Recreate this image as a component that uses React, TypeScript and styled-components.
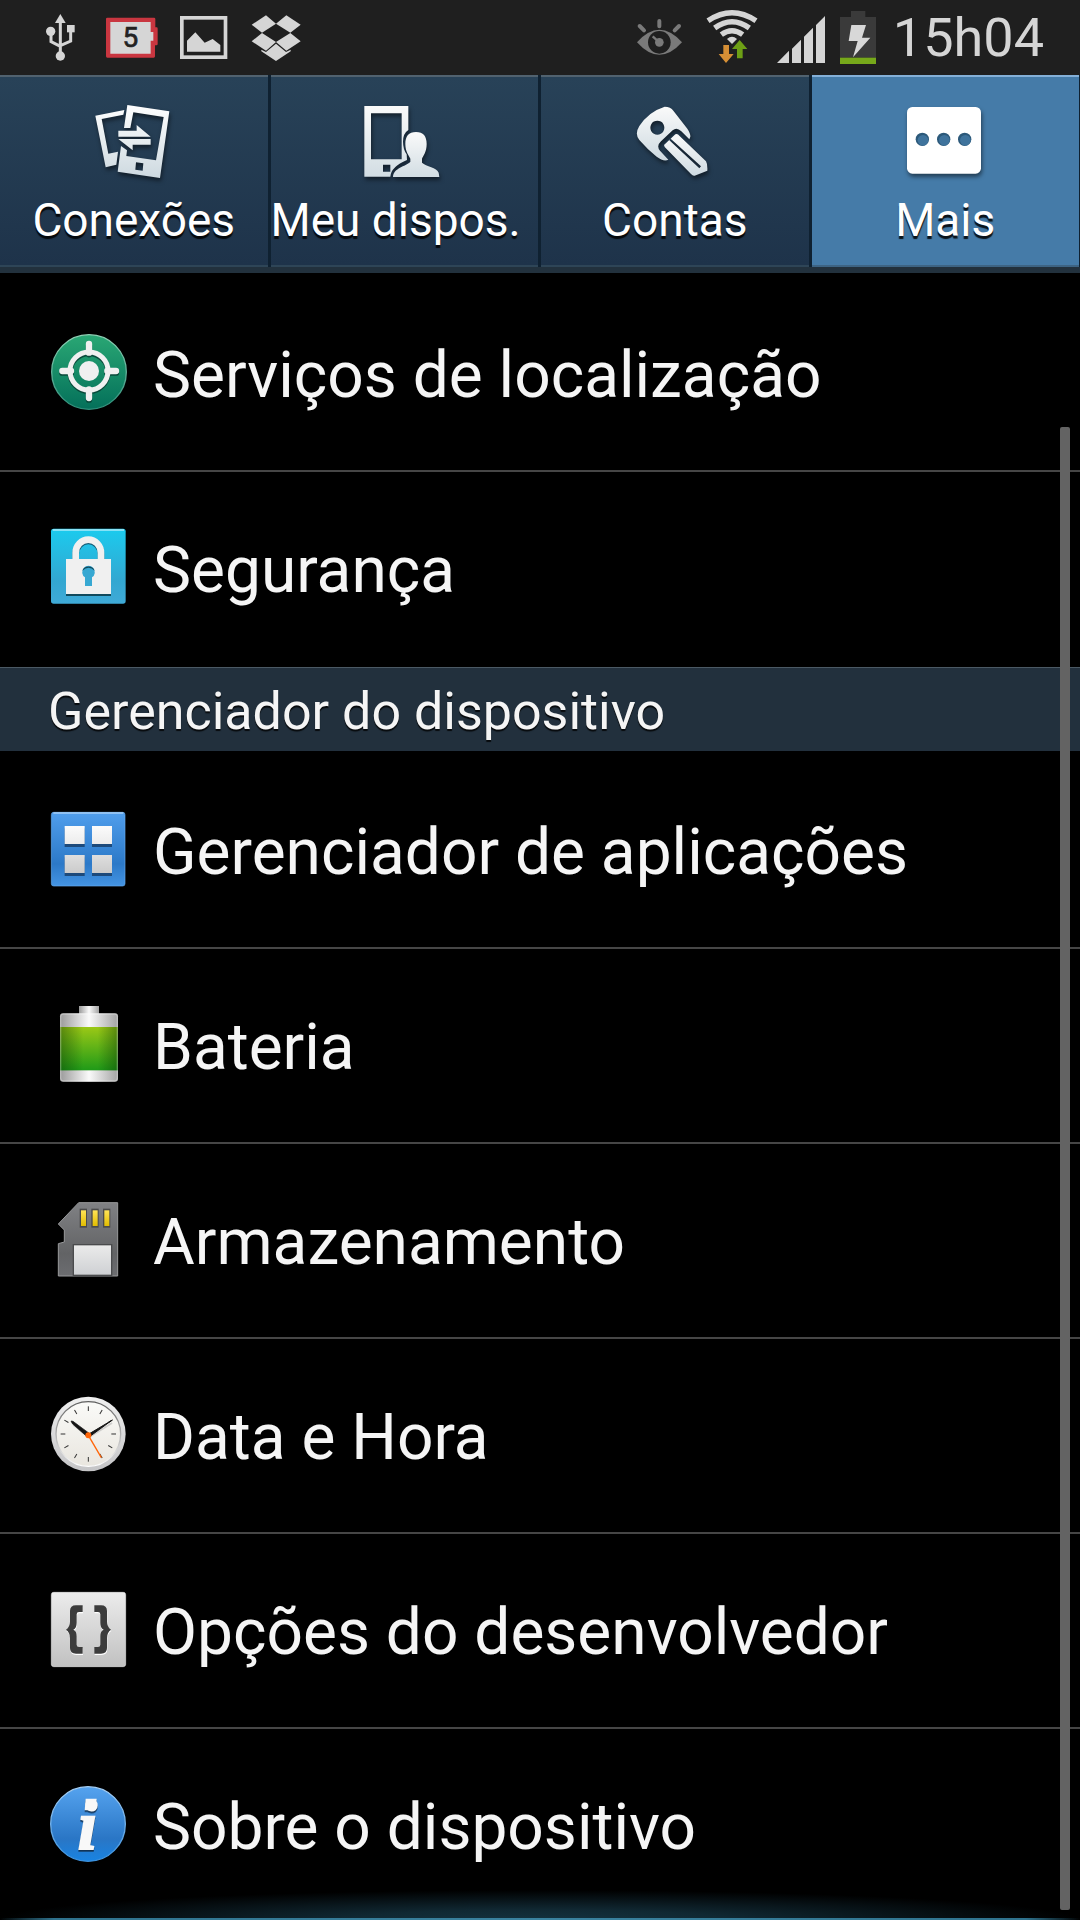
import React from "react";
import styled, { createGlobalStyle } from "styled-components";

const GlobalStyle = createGlobalStyle`
  * { box-sizing: border-box; }
  body {
    margin: 0;
    background: #000;
    color: #f5f5f5;
    font-family: Roboto, "Noto Sans", sans-serif;
  }
  button { font: inherit; color: inherit; border: 0; margin: 0; background: none; }
`;

const Screen = styled.div`
  display: flex;
  flex-direction: column;
  height: 100vh;
  overflow: hidden;
`;

const StatusBar = styled.header`
  display: flex;
  justify-content: space-between;
  flex: none;
  height: 75px;
  padding: 0 36px 0 45px;
  background: #1f1f1f;
  color: #d5d5d5;
`;

const StatusGroup = styled.div<{ $gap: number }>`
  display: flex;
  align-items: center;
  gap: ${(p) => p.$gap}px;
`;

const StatusIcon = styled.svg`
  display: block;
  flex: none;
  height: 75px;
  overflow: visible;
`;

const Clock = styled.time`
  font-size: 54px;
  line-height: 76px;
`;

const TabBar = styled.nav`
  display: grid;
  grid-template-columns: repeat(4, 1fr);
  gap: 3px;
  flex: none;
  height: 198px;
  padding: 0 1px 6px 0;
  background: linear-gradient(#0f2131 192px, #22313d 192px);
`;

const Tab = styled.button<{ $active?: boolean }>`
  display: flex;
  flex-direction: column;
  align-items: center;
  gap: 13px;
  min-width: 0;
  padding: 27px 0 0;
  border-top: 2px solid ${(p) => (p.$active ? "#84b0d8" : "#51626f")};
  border-bottom: 2px solid ${(p) => (p.$active ? "#3d6484" : "#2e4557")};
  background: ${(p) => (p.$active ? "#457ba8" : "linear-gradient(#284258, #1e334a)")};
`;

const TabIcon = styled.svg`
  display: block;
  width: 76px;
  height: 76px;
  overflow: visible;
  filter: drop-shadow(1px 3px 2px rgba(0, 0, 0, 0.5));
`;

const TabLabel = styled.span<{ $start?: boolean }>`
  align-self: ${(p) => (p.$start ? "flex-start" : "center")};
  font-size: 46px;
  line-height: 54px;
  color: #fff;
  white-space: nowrap;
  text-shadow: 0 3px 1px rgba(0, 0, 0, 0.85);
`;

const Content = styled.main`
  position: relative;
  flex: 1;
  min-height: 0;
  padding-top: 4px;
  overflow: hidden;
`;

const List = styled.ul`
  margin: 0;
  padding: 0;
  list-style: none;
`;

const Item = styled.li`
  border-bottom: 2px solid #464646;
  &:last-child { border-bottom-color: transparent; }
`;

const Row = styled.button`
  display: flex;
  align-items: center;
  gap: 27px;
  width: 100%;
  height: 193px;
  padding: 0 24px 3px 50px;
  text-align: left;
`;

const RowIcon = styled.svg`
  display: block;
  flex: none;
  width: 76px;
  height: 76px;
  overflow: visible;
`;

const RowLabel = styled.span`
  padding-top: 8px;
  font-size: 64px;
  line-height: 74px;
  white-space: nowrap;
`;

const SectionTitle = styled.h2`
  margin: 0 0 3px;
  padding: 0 48px;
  height: 84px;
  border-top: 1px solid #4b5964;
  background: #22303d;
  font-size: 52px;
  font-weight: 400;
  line-height: 88px;
  white-space: nowrap;
  text-shadow: 0 2px 1px rgba(0, 0, 0, 0.8);
`;

const ScrollThumb = styled.div`
  position: absolute;
  top: 154px;
  right: 10px;
  bottom: 10px;
  width: 10px;
  border-radius: 2px;
  background: #636363;
`;

const EdgeGlow = styled.div`
  position: absolute;
  right: 0;
  bottom: 0;
  left: 0;
  height: 30px;
  background: radial-gradient(ellipse 50% 100% at 50% 100%, #14323f, rgba(20, 50, 63, 0.8) 35%, transparent);

  &::after {
    content: "";
    position: absolute;
    right: 0;
    bottom: 0;
    left: 0;
    height: 2px;
    background: linear-gradient(90deg, transparent, #2f738e 5%, #3b83a0 50%, #2f738e 95%, transparent);
  }
`;

const Fade = ({ id, from, to, mid }: { id: string; from: string; to: string; mid?: string }) => (
  <linearGradient id={id} x1="0" y1="0" x2="0" y2="1">
    <stop offset="0" stopColor={from} />
    {mid && <stop offset="0.7" stopColor={mid} />}
    <stop offset="1" stopColor={to} />
  </linearGradient>
);

const UsbIcon = () => (
  <StatusIcon width="40" viewBox="135 0 120 225" fill="#d5d5d5" aria-hidden>
    <path d="M181 42l16 27h-32z" />
    <circle cx="152" cy="94" r="14" />
    <rect x="201" y="75" width="23" height="22" />
    <circle cx="181" cy="168" r="14" />
    <path d="M181 60v105M153 95v30l28 14M212 95v28l-31 14" fill="none" stroke="#d5d5d5" strokeWidth="9" />
  </StatusIcon>
);

const LowBatteryIcon = () => (
  <StatusIcon width="55" viewBox="315 0 165 225" aria-hidden>
    <path d="M322 53h140q4 0 4 4v25h4q3 0 3 4v46q0 4-4 4h-4v33q0 4-4 4H322q-4 0-4-4V57q0-4 4-4z" fill="#c93640" />
    <path d="M331 66h121v30h8v26h-8v39H331z" fill="#d6d6d6" />
    <text x="391" y="142" fontSize="84" fontFamily="Roboto" fill="#222" stroke="#222" strokeWidth="2" textAnchor="middle">5</text>
  </StatusIcon>
);

const PictureIcon = () => (
  <StatusIcon width="50" viewBox="540 0 150 225" aria-hidden>
    <rect x="545.5" y="53.5" width="131" height="118" fill="none" stroke="#d5d5d5" strokeWidth="11" />
    <path d="M561 155v-33l25-25 28 31 24-11 23 18v20z" fill="#d5d5d5" />
  </StatusIcon>
);

const DropboxIcon = () => (
  <StatusIcon width="52" viewBox="750 0 156 225" fill="#d5d5d5" aria-hidden>
    <path d="M798 46l30 25-42 27-31-24zM859 46l-31 25 43 27 31-24zM755 124l31-25 42 27-30 26zM902 124l-31-25-43 27 31 26z" />
    <path d="M828 131l30 25 14-7v5l-44 29-44-29v-5l14 7z" />
  </StatusIcon>
);

const EyeIcon = () => (
  <StatusIcon width="49" viewBox="102 0 147 225" aria-hidden>
    <path d="M105 127q67-75 135 0q-68 75-135 0z" fill="#7a7a7a" />
    <circle cx="172" cy="127" r="34" fill="#1f1f1f" />
    <circle cx="172" cy="127" r="13" fill="#7a7a7a" />
    <path d="M172 127l-20-18" stroke="#7a7a7a" strokeWidth="7" />
    <path d="M172 63v16M113 78l13 13M231 78l-13 13" stroke="#7a7a7a" strokeWidth="12" strokeLinecap="round" />
  </StatusIcon>
);

const WifiIcon = () => (
  <StatusIcon width="63" viewBox="294 0 189 225" aria-hidden>
    <g fill="none" stroke="#d5d5d5" strokeWidth="16">
      <path d="M321 62Q393 14 465 62" />
      <path d="M341 84Q393 46 445 84" />
      <path d="M361 104Q393 80 425 104" />
    </g>
    <path d="M378 117q15-14 30 0l-15 15z" fill="#d5d5d5" />
    <path d="M367 135h17v27h14l-23 27-22-27h14z" fill="#d68f35" />
    <path d="M416 120l23 27h-14v28h-17v-28h-15z" fill="#6d9f15" />
  </StatusIcon>
);

const SignalIcon = () => (
  <StatusIcon width="50" viewBox="528 0 150 225" fill="#d5d5d5" aria-hidden>
    <path d="M531 189l36-37v37zM576 189v-43l27-27v70zM612 189v-79l27-27v106zM648 189V75l27-27v141z" />
  </StatusIcon>
);

const ChargingIcon = () => (
  <StatusIcon width="39" viewBox="723 0 117 225" aria-hidden>
    <path d="M756 33h43v18h32v122H723V51h33z" fill="#3a3a3a" />
    <rect x="723" y="173" width="108" height="19" fill="#76a81a" />
    <path d="M757 75h44l-12 38h25l-52 59 14-49h-27z" fill="#d8d8d8" />
  </StatusIcon>
);

const ConnectionsIcon = () => (
  <TabIcon viewBox="287 312 228 228" aria-hidden>
    <defs>
      <linearGradient id="tabMetal" gradientUnits="userSpaceOnUse" x1="0" y1="312" x2="0" y2="540">
        <stop offset="0" stopColor="#fff" />
        <stop offset="1" stopColor="#ccd8df" />
      </linearGradient>
    </defs>
    <g fill="url(#tabMetal)">
      <path d="M285 347l87-17-3 14-65 13 20 104 29-6-5 39-32 8z" />
      <path fillRule="evenodd" d="M381 315l126 19-28 200-127-19 10-77 18 13-2 17 89 13 23-130-91-14-9 47h-19zM407 487l-2 22 22 3 2-22z" />
      <path d="M354 392h55v-17l42 35H354zM354 417h97v17h-54v17z" />
    </g>
  </TabIcon>
);

const DeviceIcon = () => (
  <TabIcon viewBox="80 102 228 228" aria-hidden>
    <defs><Fade id="deviceMetal" from="#fafafa" to="#d2dde3" /></defs>
    <path
      fill="url(#deviceMetal)"
      fillRule="evenodd"
      d="M75 108h132v72q-16 10-16 35 0 22 11 38l1 17q-48 20-50 50H75zM95 130v138h92V130zM131 284v21h22v-21z"
    />
    <path
      fill="url(#deviceMetal)"
      d="M230 186c22 0 32 13 32 36 0 24-10 35-14 44v12c12 11 45 15 50 30l2 13H161c2-28 37-31 52-45v-10c-4-9-15-20-15-44 0-23 10-36 32-36z"
    />
  </TabIcon>
);

const KeyIcon = () => (
  <TabIcon viewBox="892 102 228 228" aria-hidden>
    <defs><Fade id="keyMetal" from="#fafafa" to="#cedae1" /></defs>
    <path
      fill="url(#keyMetal)"
      fillRule="evenodd"
      d="M975 110q18 0 26 12l42 54q10 15 9 24l-3 8-24-24q-14-14-26-3l-35 33q-15 14-3 28l25 27q-14 7-35-9-28-22-52-50-15-18 0-42 28-43 76-58zM953 152a21 21 0 1 0 .1 0z"
    />
    <path
      fill="url(#keyMetal)"
      fillRule="evenodd"
      d="M973 225l34-32q7-3 12 4l80 77q5 8 4 28l-38 15q-5 2-11-5l-79-81zM993 206l-4 5 90 84 5-6z"
    />
  </TabIcon>
);

const MoreIcon = () => (
  <TabIcon viewBox="501 102 228 228" aria-hidden>
    <rect x="501" y="111" width="222" height="200" rx="16" fill="#fff" />
    {[547, 611, 674].map((x) => (
      <React.Fragment key={x}>
        <circle cx={x} cy="208" r="20" fill="#2c597a" />
        <circle cx={x + 2} cy="211" r="16" fill="#3f739c" />
      </React.Fragment>
    ))}
  </TabIcon>
);

const LocationIcon = () => (
  <RowIcon viewBox="150 102 228 228" aria-hidden>
    <defs><Fade id="locFill" from="#2aa774" to="#04705a" /><Fade id="locEdge" from="#8fd1b5" to="#2f8f7a" /></defs>
    <circle cx="267" cy="216" r="112" fill="url(#locFill)" stroke="url(#locEdge)" strokeWidth="4" />
    {["#0a4a3b", "#f0f0f0"].map((c, i) => (
      <g key={c} transform={i ? undefined : "translate(0 5)"}>
        <circle cx="267" cy="213" r="57" fill="none" stroke={c} strokeWidth="15" />
        <path d="M267 132v26M267 268v26M187 213h26M322 213h26" stroke={c} strokeWidth="19" strokeLinecap="round" />
        {i === 1 && <circle cx="267" cy="213" r="30" fill={c} />}
      </g>
    ))}
  </RowIcon>
);

const SecurityIcon = () => (
  <RowIcon viewBox="150 687 228 228" aria-hidden>
    <defs><Fade id="secFill" from="#1bcbee" mid="#33a7d1" to="#3faad7" /></defs>
    <rect x="153" y="686" width="224" height="225" rx="8" fill="url(#secFill)" />
    <path d="M158 690h214" stroke="#86e2f6" strokeWidth="6" />
    <path d="M227 781v-22a38 40 0 0 1 76 0v22" transform="translate(0 4)" fill="none" stroke="#155e78" strokeWidth="20" />
    <rect x="198" y="780" width="135" height="108" fill="#114a5c" />
    <path d="M227 781v-22a38 40 0 0 1 76 0v22" fill="none" stroke="#f0f0f0" strokeWidth="20" />
    <rect x="198" y="777" width="135" height="105" fill="#f0f0f0" />
    <path d="M255 858v-26a19 19 0 1 1 21 0v26z" fill="#37a8d2" />
    <path d="M247 812a20 20 0 0 1 37 0q-18-18-37 0z" fill="#114a5c" />
  </RowIcon>
);

const AppsIcon = () => (
  <RowIcon viewBox="150 93 228 228" aria-hidden>
    <defs>
      <Fade id="appFill" from="#509eec" mid="#2c79c8" to="#4494e3" />
      <Fade id="tileLight" from="#fbfbfb" to="#ececec" />
      <Fade id="tileDark" from="#dedede" to="#cbcbcb" />
    </defs>
    <rect x="154" y="97" width="221" height="221" rx="7" fill="url(#appFill)" stroke="#64aaf0" strokeWidth="2" />
    <path d="M160 99h210" stroke="#a5cff9" strokeWidth="5" />
    {[194, 276].map((x) =>
      [138, 225].map((y) => (
        <g key={`${x}-${y}`}>
          <rect x={x} y={y + 7} width="60" height="56" fill="#1d4a7b" />
          <rect x={x} y={y} width="60" height="54" fill={y < 200 ? "url(#tileLight)" : "url(#tileDark)"} />
        </g>
      ))
    )}
  </RowIcon>
);

const BatteryIcon = () => (
  <RowIcon viewBox="150 678 228 228" aria-hidden>
    <defs>
      <linearGradient id="batCase">
        <stop offset="0" stopColor="#9a9a9a" />
        <stop offset="0.5" stopColor="#fafafa" />
        <stop offset="1" stopColor="#a3a3a3" />
      </linearGradient>
      <Fade id="batFill" from="#9bc816" to="#1f9a18" />
      <linearGradient id="batShade">
        <stop offset="0" stopColor="#053000" stopOpacity="0.42" />
        <stop offset="0.4" stopColor="#053000" stopOpacity="0" />
        <stop offset="0.65" stopColor="#053000" stopOpacity="0" />
        <stop offset="1" stopColor="#053000" stopOpacity="0.42" />
      </linearGradient>
    </defs>
    <rect x="237" y="678" width="60" height="24" fill="url(#batCase)" />
    <rect x="180" y="700" width="174" height="205" rx="9" fill="url(#batCase)" />
    <rect x="180" y="741" width="174" height="130" fill="url(#batFill)" />
    <rect x="180" y="741" width="174" height="130" fill="url(#batShade)" />
    <rect x="182" y="702" width="170" height="201" rx="8" fill="none" stroke="#fff" strokeOpacity="0.3" strokeWidth="4" />
  </RowIcon>
);

const SdCardIcon = () => (
  <RowIcon viewBox="150 63 228 228" aria-hidden>
    <defs>
      <Fade id="sdBody" from="#808184" mid="#626365" to="#6c6d70" />
      <Fade id="sdLabel" from="#ebebeb" to="#ced0d3" />
      <Fade id="sdPin" from="#ffe457" to="#e2bd00" />
    </defs>
    <path d="M236 68h117v220H175v-97l18-5v-36l-18-18z" fill="url(#sdBody)" stroke="#98999b" strokeWidth="3" />
    {[241, 276, 311].map((x) => (
      <g key={x}>
        <rect x={x - 2} y="86" width="22" height="57" fill="#4b4b4b" />
        <rect x={x + 2} y="91" width="15" height="47" fill="url(#sdPin)" />
      </g>
    ))}
    <rect x="220" y="194" width="115" height="92" fill="url(#sdLabel)" stroke="#4a4b4d" strokeWidth="4" />
  </RowIcon>
);

const ClockIcon = () => (
  <RowIcon viewBox="150 648 228 228" aria-hidden>
    <defs><Fade id="clockRim" from="#f0f0f0" to="#c4c4c6" /><Fade id="clockFace" from="#fafaf8" to="#e9e6df" /><Fade id="clockLip" from="#5f5f5f" to="#ffffff" /></defs>
    <circle cx="265" cy="762" r="112" fill="url(#clockRim)" />
    <circle cx="265" cy="762" r="97" fill="url(#clockFace)" stroke="url(#clockLip)" strokeWidth="4" />
    {Array.from({ length: 12 }, (_, i) => (
      <path key={i} d="M265 679v14" stroke="#333" strokeWidth="3" transform={`rotate(${i * 30} 265 762)`} />
    ))}
    <path d="M268 771l-48-36M268 771l68-42" stroke="#aaa" strokeOpacity="0.5" strokeWidth="6" />
    <path d="M213 723l4 8 44 39 8-9-50-37z" fill="#151515" stroke="#151515" strokeWidth="2" />
    <path d="M265 763l72-43-70 51z" fill="#151515" stroke="#151515" strokeWidth="3" />
    <path d="M265 766l39 67" stroke="#ff6508" strokeWidth="4" />
    <circle cx="265" cy="766" r="9" fill="#ff6508" />
  </RowIcon>
);

const BracesIcon = () => (
  <RowIcon viewBox="150 93 228 228" aria-hidden>
    <defs><Fade id="devFill" from="#ececec" to="#c1c1c1" /></defs>
    <rect x="154" y="97" width="223" height="223" rx="7" fill="url(#devFill)" stroke="#fff" strokeOpacity="0.5" strokeWidth="3" />
    {["#fff", "#3c3c3c"].map((c, i) => (
      <g key={c} fill={c} transform={i ? undefined : "translate(1 4)"}>
        <path d="M248 136v20h-11q-7 0-7 7v25q0 16-10 21 10 4 10 20v25q0 7 7 7h11v20h-20q-18 0-18-17v-30q0-17-12-25 12-9 12-24v-32q0-17 18-17z" />
        <path d="M283 136v20h11q7 0 7 7v25q0 16 10 21-10 4-10 20v25q0 7-7 7h-11v20h20q18 0 18-17v-30q0-17 12-25-12-9-12-24v-32q0-17-18-17z" />
      </g>
    ))}
  </RowIcon>
);

const InfoMark = styled.g`
  fill: #f8f8f8;
  filter: drop-shadow(0 5px 0 #123456);
`;

const InfoIcon = () => (
  <RowIcon viewBox="150 678 228 228" aria-hidden>
    <defs><Fade id="infoFill" from="#55a3ef" mid="#2a76c5" to="#1883e2" /><Fade id="infoEdge" from="#a6cff5" to="#3d92de" /></defs>
    <circle cx="264" cy="792" r="112" fill="url(#infoFill)" stroke="url(#infoEdge)" strokeWidth="4" />
    <InfoMark>
      <path d="M257 716h33l-3 35h-33z" />
      <text
        x="262"
        y="866"
        fontSize="208"
        fontFamily="Liberation Serif"
        fontWeight="700"
        fontStyle="italic"
        textAnchor="middle"
        stroke="#f8f8f8"
        strokeWidth="6"
      >
        i
      </text>
    </InfoMark>
  </RowIcon>
);

type Entry = { label: string; Icon: () => React.JSX.Element };

const tabs: (Entry & { start?: boolean; active?: boolean })[] = [
  { label: "Conexões", Icon: ConnectionsIcon },
  { label: "Meu dispos.", Icon: DeviceIcon, start: true },
  { label: "Contas", Icon: KeyIcon },
  { label: "Mais", Icon: MoreIcon, active: true },
];

const permissions: Entry[] = [
  { label: "Serviços de localização", Icon: LocationIcon },
  { label: "Segurança", Icon: SecurityIcon },
];

const deviceManager: Entry[] = [
  { label: "Gerenciador de aplicações", Icon: AppsIcon },
  { label: "Bateria", Icon: BatteryIcon },
  { label: "Armazenamento", Icon: SdCardIcon },
  { label: "Data e Hora", Icon: ClockIcon },
  { label: "Opções do desenvolvedor", Icon: BracesIcon },
  { label: "Sobre o dispositivo", Icon: InfoIcon },
];

const SettingsList = ({ entries }: { entries: Entry[] }) => (
  <List>
    {entries.map(({ label, Icon }) => (
      <Item key={label}>
        <Row type="button">
          <Icon />
          <RowLabel>{label}</RowLabel>
        </Row>
      </Item>
    ))}
  </List>
);

export default function App() {
  return (
    <Screen>
      <GlobalStyle />
      <StatusBar>
        <StatusGroup $gap={20}>
          <UsbIcon />
          <LowBatteryIcon />
          <PictureIcon />
          <DropboxIcon />
        </StatusGroup>
        <StatusGroup $gap={14}>
          <EyeIcon />
          <WifiIcon />
          <SignalIcon />
          <ChargingIcon />
          <Clock>15h04</Clock>
        </StatusGroup>
      </StatusBar>
      <TabBar>
        {tabs.map(({ label, Icon, start, active }) => (
          <Tab key={label} type="button" $active={active} aria-current={active ? "page" : undefined}>
            <Icon />
            <TabLabel $start={start}>{label}</TabLabel>
          </Tab>
        ))}
      </TabBar>
      <Content>
        <SettingsList entries={permissions} />
        <SectionTitle>Gerenciador do dispositivo</SectionTitle>
        <SettingsList entries={deviceManager} />
        <EdgeGlow />
        <ScrollThumb />
      </Content>
    </Screen>
  );
}
